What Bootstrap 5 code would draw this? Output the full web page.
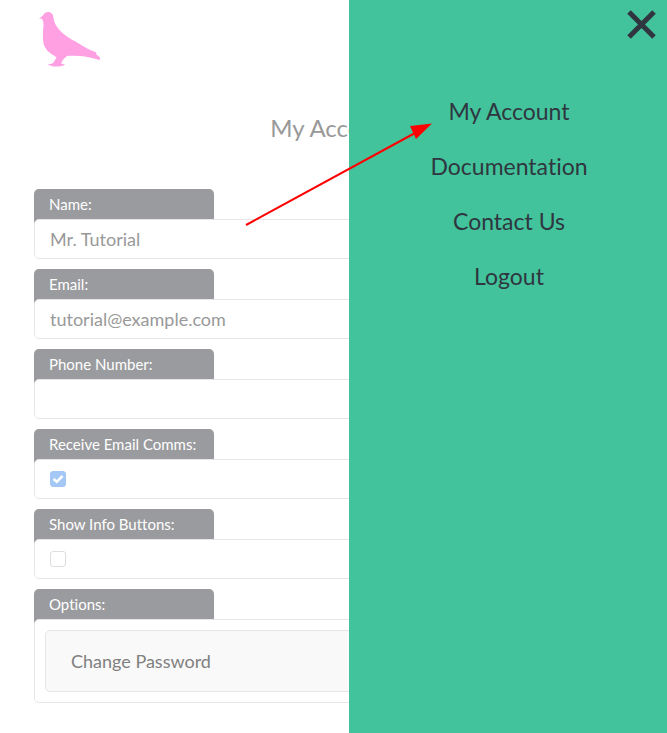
<!DOCTYPE html>
<html lang="en">
<head>
    <meta charset="UTF-8">
    <meta name="viewport" content="width=device-width, initial-scale=1.0">
    <title>My Account</title>
    <link href="https://cdn.jsdelivr.net/npm/bootstrap@5.3.0/dist/css/bootstrap.min.css" rel="stylesheet">
    <style>
        html, body {
            height: 733px;
            overflow: hidden;
        }

        body {
            font-family: Lato, "Liberation Sans", sans-serif;
            font-variant-ligatures: none;
            color: #999;
            background: #fff;
        }

        .page-wrap {
            padding: 0 34px;
        }

        .logo-box {
            height: 111px;
            padding-top: 11px;
        }

        .logo-box svg {
            display: block;
        }

        .page-title {
            font-size: 24px;
            font-weight: 400;
            line-height: 34px;
            color: #999;
            margin: 0 0 44px;
        }

        .field-tab {
            width: 180px;
            height: 35px;
            margin-bottom: -5px;
            padding: 0 15px;
            background: #9a9b9e;
            color: #fff;
            font-size: 15px;
            line-height: 30px;
            border-radius: 5px 5px 0 0;
        }

        .field-box {
            position: relative;
            height: 40px;
            margin-bottom: 10px;
            padding: 0 15px;
            border: 1px solid #e6e6e6;
            border-radius: 5px;
            background: #fff;
            font-size: 18px;
            color: #999;
        }

        .tick-box {
            width: 16px;
            height: 16px;
            border: 1px solid #dedede;
            border-radius: 3px;
            background: #fff;
        }

        .tick-box.on {
            background: #a3c8f5;
            border-color: #a3c8f5;
        }

        .options-box {
            position: relative;
            height: 84px;
            padding: 10px;
            border: 1px solid #e6e6e6;
            border-radius: 5px;
            background: #fff;
        }

        .option-row {
            height: 62px;
            padding: 0 25px;
            border: 1px solid #e6e6e6;
            border-radius: 5px;
            background: #f9f9f9;
            font-size: 18px;
            color: #808080;
        }

        .side-menu {
            position: absolute;
            top: 0;
            right: 0;
            width: 318px;
            height: 733px;
            padding: 84px 0 0 2px;
            background: #42c39b;
        }

        .side-menu a {
            display: block;
            height: 55px;
            font-size: 23px;
            line-height: 55px;
            color: #2f3640;
            text-decoration: none;
        }

        .menu-close {
            position: absolute;
            top: 10px;
            right: 11px;
            width: 29px;
            height: 29px;
            padding: 0;
            border: 0;
            background: none;
        }

        .menu-close svg, .note-arrow {
            display: block;
        }

        .note-arrow {
            position: absolute;
            top: 0;
            left: 0;
        }
    </style>
</head>
<body>
    <div class="page-wrap">
        <div class="logo-box">
            <svg width="70" height="60" viewBox="34 11 70 60">
                <path fill="#ffa0e3" d="M39 18.500 43 15.500C44 12.500 47 11.500 49.500 12 52 13 53.500 15 53.500 18 54 21 54.500 23 56.500 26 59 30 63 33.500 67 36.500 71 39.500 75 41 78 43 83 46.500 90 50 96.500 52.500L96 54 100 57.500 100 60C94 58.500 90 57.500 85 56.500 79 55.500 73 55.500 67 56 65.500 57 64 58.500 62.500 60.500L61 63.500 65 64.500 63.500 65.500 59 66.500 53 66.500 47.500 64.500 52.500 63.500 55 60 56.500 57.500 54 55.500C49 53 45 49 43.500 43.500 42.500 38 43 31 43.500 25 43.500 22 43 20 41.500 18.500Z"/>
            </svg>
        </div>
        <h1 class="page-title text-center">My Account</h1>

        <form>
            <div class="field-tab">Name:</div>
            <div class="field-box d-flex align-items-center">Mr. Tutorial</div>

            <div class="field-tab">Email:</div>
            <div class="field-box d-flex align-items-center">tutorial@example.com</div>

            <div class="field-tab">Phone Number:</div>
            <div class="field-box d-flex align-items-center"></div>

            <div class="field-tab">Receive Email Comms:</div>
            <div class="field-box d-flex align-items-center">
                <div class="tick-box on d-flex align-items-center justify-content-center">
                    <svg width="12" height="10" viewBox="0 0 12 10"><path d="M1.500 5 4.800 7.800 10.500 2" fill="none" stroke="#fff" stroke-width="2.600"/></svg>
                </div>
            </div>

            <div class="field-tab">Show Info Buttons:</div>
            <div class="field-box d-flex align-items-center">
                <div class="tick-box"></div>
            </div>

            <div class="field-tab">Options:</div>
            <div class="options-box">
                <div class="option-row d-flex align-items-center">Change Password</div>
            </div>
        </form>
    </div>

    <div class="side-menu text-center">
        <button class="menu-close" type="button" aria-label="Close">
            <svg width="29" height="29" viewBox="0 0 29 29"><path d="M2 2 27 27M27 2 2 27" stroke="#2f3640" stroke-width="5" fill="none"/></svg>
        </button>
        <a href="#">My Account</a>
        <a href="#">Documentation</a>
        <a href="#">Contact Us</a>
        <a href="#">Logout</a>
    </div>

    <svg class="note-arrow" width="667" height="733" viewBox="0 0 667 733">
        <path d="M246 225 415 133" stroke="#f00" stroke-width="2" fill="none"/>
        <path d="M432 123.500 410 126 416 139Z" fill="#f00"/>
    </svg>

    <script src="https://cdn.jsdelivr.net/npm/bootstrap@5.3.0/dist/js/bootstrap.bundle.min.js"></script>
</body>
</html>
